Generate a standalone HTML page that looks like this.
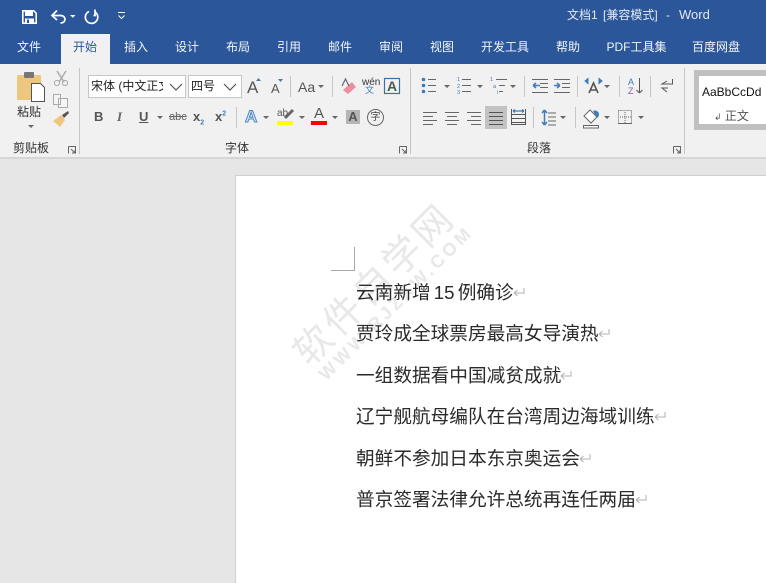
<!DOCTYPE html>
<html><head><meta charset="utf-8"><style>
html,body{margin:0;padding:0}
body{width:766px;height:583px;overflow:hidden;position:relative;background:#e6e6e6;font-family:"Liberation Sans","Noto Sans CJK SC",sans-serif}
.a{position:absolute;white-space:nowrap}
.t{color:#f2f5fa;font-size:12px;line-height:16px;top:39px;transform:translateX(-50%)}
.l{font-size:12px;line-height:14px;color:#333;top:141px}
.w{top:7px;font-size:12px;line-height:16px;color:#e4e9f3}
.doc{position:absolute;left:356px;font-size:18.67px;line-height:24px;color:#2a2a2a;white-space:nowrap;font-family:"Liberation Sans","Noto Sans CJK SC",sans-serif}
.doc svg{display:inline-block;vertical-align:1px;margin-left:-2px}
</style></head><body>
<div class="a" style="left:0;top:0;width:766px;height:64px;background:#2b579a"></div>
<svg class="a" style="left:0;top:0" width="140" height="32" fill="none">
<path d="M22.800 10.800h11l2.400 2.400v10h-13.400z" stroke="#fff" stroke-width="1.600"/>
<path d="M25 11h8v5h-8zM25 18.500h9v5h-9z" fill="#fff"/><rect x="27" y="19.500" width="2" height="3.500" fill="#2b579a"/>
<path d="M57 10.500l-5 5 5 4.500M52.500 15.500h8c3 0 4.500 2 4.500 3.800s-1.500 3.700-4.500 3.700" stroke="#fff" stroke-width="1.700"/>
<path d="M70 15h5.500l-2.700 2.800z" fill="#fff"/>
<path d="M89 11.500a6.200 6.200 0 1 0 6 .5" stroke="#fff" stroke-width="1.700"/><path d="M95 9.500v6h-1.500" stroke="#fff" stroke-width="1.700"/>
<path d="M118 12.500h7M118.500 15.500l3 3 3-3" stroke="#fff" stroke-width="1"/>
</svg>
<div class="a" style="left:61px;top:34px;width:49px;height:30px;background:#f1f1f1"></div>
<div class="a t" style="left:29px">文件</div>
<div class="a t" style="left:85px;color:#2b579a">开始</div>
<div class="a t" style="left:136px">插入</div>
<div class="a t" style="left:187px">设计</div>
<div class="a t" style="left:238px">布局</div>
<div class="a t" style="left:289px">引用</div>
<div class="a t" style="left:340px">邮件</div>
<div class="a t" style="left:391px">审阅</div>
<div class="a t" style="left:442px">视图</div>
<div class="a t" style="left:505px">开发工具</div>
<div class="a t" style="left:568px">帮助</div>
<div class="a t" style="left:636.500px">PDF工具集</div>
<div class="a t" style="left:716px">百度网盘</div>
<div class="a w" style="left:567px">文档1</div>
<div class="a w" style="left:603px">[兼容模式]</div>
<div class="a w" style="left:666px">-</div>
<div class="a w" style="left:679px;font-size:13px">Word</div>

<div class="a" style="left:0;top:64px;width:766px;height:93px;background:#f1f1f1"></div>
<div class="a" style="left:0;top:157px;width:766px;height:2px;background:#d6d6d6"></div>

<svg class="a" style="left:0;top:64px" width="766" height="94" fill="none" stroke="#666">
<g stroke="#c6c6c6">
<path d="M79.500 4v86M410.500 4v86M684.500 4v86M236.500 43v21M290.500 12v21M332.500 12v21M524.500 12v21M577.500 12v21M619.500 12v21M650.500 12v21M533.500 43v21M575.500 43v21"/>
</g>
<rect x="17" y="11" width="24" height="25" rx="1" fill="#edc77f" stroke="none"/><rect x="24" y="8" width="10" height="6" rx="1" fill="#777" stroke="none"/>
<path d="M31.500 19.500h9l4 4v14h-13z" fill="#fff" stroke="#555"/>
<path d="M57 7l7 11M66 7l-7 11" stroke="#aaa" stroke-width="1.500"/><circle cx="57" cy="19" r="2.600" stroke="#aaa"/><circle cx="65" cy="19" r="2.600" stroke="#aaa"/>
<path d="M53.500 30.500h7v10h-7zM58.500 34.500h9v9h-9z" fill="#f5f5f5" stroke="#aaa"/>
<path d="M53 57l8-6 4 5-5 7z" fill="#edc77f" stroke="none"/><path d="M62 51l6-4 1 2-5 5z" fill="#555" stroke="none"/>
<g><path d="M68.500 82.500h7v7M68.500 82.500v7"/><path d="M71 85l4 4M72 89h3v-3"/></g>
<g transform="translate(331 0)"><path d="M68.500 82.500h7v7M68.500 82.500v7"/><path d="M71 85l4 4M72 89h3v-3"/></g>
<g transform="translate(605 0)"><path d="M68.500 82.500h7v7M68.500 82.500v7"/><path d="M71 85l4 4M72 89h3v-3"/></g>
<path d="M170 18l6 6 6-6M224 18l6 6 6-6" stroke="#555" stroke-width="1.200"/>
<path d="M256 17h5l-2.500-3zM278 15h5l-2.500 3z" fill="#3f7cb8" stroke="none"/>
<path d="M343 26l9-8 4 5-8 7z" fill="#ee8f9c" stroke="none"/><path d="M342 22l3.500-7 3.500 7" stroke="#666" stroke-width="1.200"/>
<rect x="384.500" y="14.500" width="15" height="15" stroke="#3f6fa3" stroke-width="1.200"/>
<path d="M285 54l8-8" stroke="#666" stroke-width="3"/>
<g fill="#666" stroke="none">
<path d="M318 21h6l-3 3zM157 52h6l-3 3zM263 52h6l-3 3zM299 52h6l-3 3zM332 52h6l-3 3zM444 21h6l-3 3zM477 21h6l-3 3zM510 21h6l-3 3zM604 21h6l-3 3zM560 52h6l-3 3zM604 52h6l-3 3zM638 52h6l-3 3z"/>
<path d="M28 61h6l-3 3z"/>
</g>
<g fill="#3f7cb8" stroke="none"><circle cx="423.500" cy="15.500" r="1.800"/><circle cx="423.500" cy="21.500" r="1.800"/><circle cx="423.500" cy="27.500" r="1.800"/></g>
<path d="M428 15.500h8M428 21.500h8M428 27.500h8M462 15.500h9M462 21.500h9M462 27.500h9M496 15.500h11M499 21.500h6M499 27.500h4"/>
<path d="M532 15.500h16M540 19.500h8M540 23.500h8M532 28.500h16M554 15.500h16M562 19.500h8M562 23.500h8M554 28.500h16"/>
<path d="M533 21.500h7M533 21.500l3-2.500M533 21.500l3 2.500M554 21.500h6M560 21.500l-3-2.500M560 21.500l-3 2.500" stroke="#3f7cb8" stroke-width="1.500"/>
<path d="M589 29l4.500-10 4.500 10M590.500 26h6" stroke="#555" stroke-width="1.600"/>
<path d="M585 17l3-2.500v5zM602 17l-3-2.500v5z" fill="#3f7cb8" stroke="#3f7cb8"/>
<path d="M639.500 14v15M639.500 29l-3-3M639.500 29l3-3" stroke="#555"/>
<path d="M667 17l-5 3h5M667 28l-5-4h6M667 20h5.500v-5" stroke="#555"/>
<path d="M423 48.500h14M423 52.500h10M423 56.500h14M423 60.500h10M445 48.500h14M447 52.500h10M445 56.500h14M447 60.500h10M467 48.500h14M471 52.500h10M467 56.500h14M471 60.500h10"/>
<rect x="485" y="42" width="22" height="23" fill="#c3c3c3" stroke="none"/>
<path d="M489 48.500h14M489 52.500h14M489 56.500h14M489 60.500h14" stroke="#555"/>
<path d="M511 50.500h15M511 54.500h15M511 58.500h15M511 60.500h15M511.500 45v15M525.500 45v15" stroke="#555"/><path d="M513 47h11M513 47l2-1.500M513 47l2 1.500M524 47l-2-1.500M524 47l-2 1.500" stroke="#3f7cb8" stroke-width="1.200"/>
<path d="M544.500 46v15M544.500 46l-2.500 3M544.500 46l2.500 3M544.500 61l-2.500-3M544.500 61l2.500-3" stroke="#3f7cb8" stroke-width="1.500"/>
<path d="M548 49h8M548 53h8M548 57h8M548 61h8"/>
<path d="M584 52l6-6 7 7-6 6z" fill="#fff"/><path d="M597 54a4 4 0 00-4-7z" fill="#3f7cb8" stroke="none"/><rect x="583.500" y="61.500" width="15" height="2.500" fill="#fff"/>
<path d="M618.500 46.500h13v13" stroke-dasharray="1 1"/><path d="M618 53h14M625 46v14M618.500 46.500v13" stroke-dasharray="1 1"/><path d="M618 59.500h14"/>
<g fill="#3f7cb8" stroke="none" font-size="5.500" font-family="Liberation Sans"><text x="457" y="17">1</text><text x="457" y="24">2</text><text x="457" y="30">3</text><text x="490" y="17">1</text><text x="493" y="24">a</text><text x="497" y="30">i</text></g>
<text x="628" y="21" font-size="9" fill="#3f7cb8" stroke="none" font-family="Liberation Sans">A</text><text x="628" y="30" font-size="9" fill="#8a5ca8" stroke="none" font-family="Liberation Sans">Z</text>
</svg>

<div class="a" style="left:17px;top:105px;font-size:12px;line-height:14px;color:#333">粘贴</div>
<div class="a l" style="left:13px">剪贴板</div>
<div class="a l" style="left:225px">字体</div>
<div class="a l" style="left:527px">段落</div>

<div class="a" style="left:88px;top:75px;width:98px;height:23px;background:#fff;border:1px solid #c6c6c6;box-sizing:border-box;font-size:12px;line-height:21px;color:#222;overflow:hidden;padding-left:2px"><span style="display:inline-block;width:72px;overflow:hidden;vertical-align:top">宋体 (中文正文)</span></div>
<div class="a" style="left:188px;top:75px;width:54px;height:23px;background:#fff;border:1px solid #c6c6c6;box-sizing:border-box;font-size:12px;line-height:21px;color:#222;padding-left:2px">四号</div>
<svg class="a" style="left:165px;top:79px" width="75" height="16" fill="none" stroke="#555" stroke-width="1.200"><path d="M5 5l6 6 6-6M59 5l6 6 6-6"/></svg>

<div class="a" style="left:247px;top:78px;font-size:17px;line-height:20px;color:#555">A</div>
<div class="a" style="left:271px;top:80px;font-size:13px;line-height:18px;color:#555">A</div>
<div class="a" style="left:298px;top:77px;font-size:14px;line-height:20px;color:#555">Aa</div>
<div class="a" style="left:362px;top:77px;font-size:10px;line-height:11px;color:#333">wén</div>
<div class="a" style="left:365px;top:85px;font-size:9px;line-height:10px;color:#3f7cb8">文</div>
<div class="a" style="left:387px;top:78px;font-size:14px;line-height:16px;color:#555;font-weight:bold">A</div>

<div class="a" style="left:94px;top:109px;font-size:13px;font-weight:bold;line-height:16px;color:#555">B</div>
<div class="a" style="left:117px;top:109px;font-size:13px;font-weight:bold;font-style:italic;line-height:16px;color:#666;font-family:'Liberation Serif',serif">I</div>
<div class="a" style="left:139px;top:109px;font-size:13px;font-weight:bold;line-height:16px;color:#555;text-decoration:underline">U</div>
<div class="a" style="left:169px;top:110px;font-size:11px;line-height:14px;color:#666;text-decoration:line-through">abc</div>
<div class="a" style="left:193px;top:109px;font-size:13px;font-weight:bold;line-height:16px;color:#555">x<sub style="font-size:7px;color:#3f7cb8;line-height:0">2</sub></div>
<div class="a" style="left:215px;top:109px;font-size:13px;font-weight:bold;line-height:16px;color:#555">x<sup style="font-size:7px;color:#3f7cb8;line-height:0">2</sup></div>
<div class="a" style="left:245px;top:107px;font-size:17px;font-weight:bold;line-height:20px;color:#dbe8f5;-webkit-text-stroke:1px #4a86c5">A</div>
<div class="a" style="left:277px;top:108px;font-size:10px;line-height:11px;color:#555">ab</div>
<div class="a" style="left:277px;top:121px;width:16px;height:4px;background:#ff0"></div>
<div class="a" style="left:314px;top:106px;font-size:15px;line-height:15px;color:#555">A</div>
<div class="a" style="left:311px;top:121px;width:16px;height:4px;background:#f00"></div>
<div class="a" style="left:346px;top:110px;width:14px;height:14px;background:#b5b5b5;font-size:13px;font-weight:bold;line-height:14px;text-align:center;color:#555">A</div>
<div class="a" style="left:367px;top:109px;width:15px;height:15px;border:1px solid #666;border-radius:50%;font-size:10px;line-height:15px;text-align:center;color:#444">字</div>

<div class="a" style="left:694px;top:70px;width:72px;height:60px;background:#c0c0c0"></div>
<div class="a" style="left:699px;top:76px;width:67px;height:48px;background:#fff"></div>
<div class="a" style="left:702px;top:85px;font-size:12px;line-height:14px;color:#111">AaBbCcDd</div>
<div class="a" style="left:714px;top:109px;font-size:12px;line-height:14px;color:#555"><span style="font-size:9px">↲</span> 正文</div>

<div class="a" style="left:236px;top:176px;width:530px;height:407px;background:#fff;outline:1px solid #d0d0d0"></div>
<div class="a" style="left:354px;top:247px;width:1px;height:24px;background:#a8a8a8"></div>
<div class="a" style="left:331px;top:270px;width:24px;height:1px;background:#a8a8a8"></div>

<div class="a" style="left:375px;top:285px;font-size:38px;line-height:44px;color:#e8e8e8;transform:translate(-50%,-50%) rotate(-45deg);letter-spacing:4px">软件自学网</div>
<div class="a" style="left:396px;top:303px;font-size:18px;line-height:20px;color:#e8e8e8;font-weight:bold;transform:translate(-50%,-50%) rotate(-45deg);letter-spacing:3.500px">WWW.RJZXW.COM</div>

<div class="doc" style="top:281px;word-spacing:-2px">云南新增 15 例确诊<svg width="13" height="11" fill="none" stroke="#b0b0b0"><path d="M12 1v5H2M2 6l3.500-3M2 6l3.500 3"/></svg></div>
<div class="doc" style="top:322px">贾玲成全球票房最高女导演热<svg width="13" height="11" fill="none" stroke="#b0b0b0"><path d="M12 1v5H2M2 6l3.500-3M2 6l3.500 3"/></svg></div>
<div class="doc" style="top:364px">一组数据看中国减贫成就<svg width="13" height="11" fill="none" stroke="#b0b0b0"><path d="M12 1v5H2M2 6l3.500-3M2 6l3.500 3"/></svg></div>
<div class="doc" style="top:405px">辽宁舰航母编队在台湾周边海域训练<svg width="13" height="11" fill="none" stroke="#b0b0b0"><path d="M12 1v5H2M2 6l3.500-3M2 6l3.500 3"/></svg></div>
<div class="doc" style="top:447px">朝鲜不参加日本东京奥运会<svg width="13" height="11" fill="none" stroke="#b0b0b0"><path d="M12 1v5H2M2 6l3.500-3M2 6l3.500 3"/></svg></div>
<div class="doc" style="top:488px">普京签署法律允许总统再连任两届<svg width="13" height="11" fill="none" stroke="#b0b0b0"><path d="M12 1v5H2M2 6l3.500-3M2 6l3.500 3"/></svg></div>
</body></html>
